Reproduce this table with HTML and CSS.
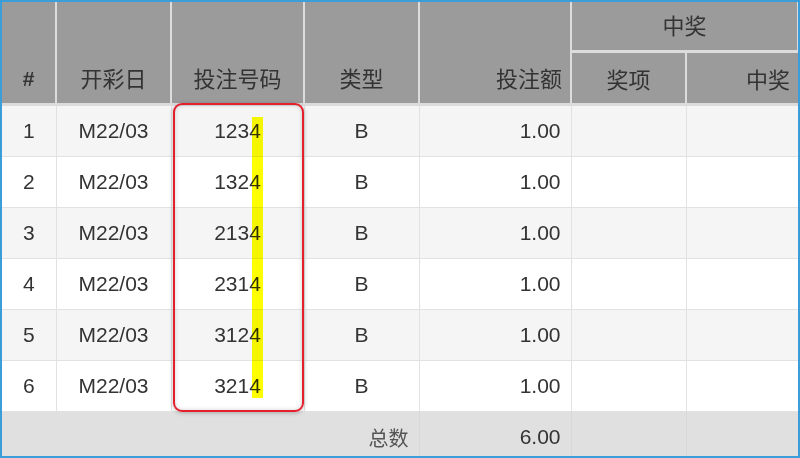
FILE: index.html
```html
<!DOCTYPE html>
<html lang="zh">
<head>
<meta charset="utf-8">
<link rel="stylesheet" href="styles.css">
</head>
<body>
<div class="frame">
  <table class="grid">
    <colgroup>
      <col class="c1"><col class="c2"><col class="c3"><col class="c4"><col class="c5"><col class="c6"><col class="c7">
    </colgroup>
    <thead>
      <tr class="h1">
        <th rowspan="2" class="hash">#</th>
        <th rowspan="2">开彩日</th>
        <th rowspan="2">投注号码</th>
        <th rowspan="2">类型</th>
        <th rowspan="2" class="right">投注额</th>
        <th colspan="2" class="group">中奖</th>
      </tr>
      <tr class="h2">
        <th>奖项</th>
        <th class="right">中奖</th>
      </tr>
    </thead>
    <tbody>
      <tr class="odd"><td>1</td><td>M22/03</td><td>1234</td><td>B</td><td class="right">1.00</td><td></td><td></td></tr>
      <tr><td>2</td><td>M22/03</td><td>1324</td><td>B</td><td class="right">1.00</td><td></td><td></td></tr>
      <tr class="odd"><td>3</td><td>M22/03</td><td>2134</td><td>B</td><td class="right">1.00</td><td></td><td></td></tr>
      <tr><td>4</td><td>M22/03</td><td>2314</td><td>B</td><td class="right">1.00</td><td></td><td></td></tr>
      <tr class="odd"><td>5</td><td>M22/03</td><td>3124</td><td>B</td><td class="right">1.00</td><td></td><td></td></tr>
      <tr><td>6</td><td>M22/03</td><td>3214</td><td>B</td><td class="right">1.00</td><td></td><td></td></tr>
    </tbody>
    <tfoot>
      <tr>
        <td colspan="4" class="right label">总数</td>
        <td class="right">6.00</td>
        <td></td><td></td>
      </tr>
    </tfoot>
  </table>
  <div class="highlight"></div>
  <div class="callout"></div>
</div>
</body>
</html>
```
FILE: styles.css
```css
html, body {
  margin: 0;
  padding: 0;
  background: #ffffff;
}
.frame {
  position: relative;
  width: 800px;
  height: 458px;
  box-sizing: border-box;
  border: 2px solid #3a9fd8;
  overflow: hidden;
  background: #ffffff;
}
.grid {
  width: 796px;
  border-collapse: collapse;
  table-layout: fixed;
  font-family: "Liberation Sans", "Noto Sans CJK SC", Arial, sans-serif;
  color: #333333;
}
.c1 { width: 54px; }
.c2 { width: 115px; }
.c3 { width: 133px; }
.c4 { width: 115px; }
.c5 { width: 152px; }
.c6 { width: 115px; }
.c7 { width: 112px; }

th {
  background: #9b9b9b;
  font-family: "Noto Sans CJK SC", "Liberation Sans", sans-serif;
  font-weight: 400;
  font-size: 22px;
  color: #333333;
  text-align: center;
  vertical-align: bottom;
  padding: 0 8px 11px;
  border-left: 2px solid #dcdcdc;
  border-right: 2px solid #dcdcdc;
  line-height: 30px;
}
thead tr:first-child th:first-child { border-left: none; }
th.hash {
  font-family: "Liberation Sans", sans-serif;
  font-weight: 700;
  font-size: 21px;
  padding-bottom: 9px;
}
.h1 { height: 49px; }
.h1 th.group {
  vertical-align: middle;
  padding: 0 8px 4px;
  border-bottom: 3px solid #dcdcdc;
}
.h2 { height: 53px; }
.h2 th { padding-bottom: 10px; }
thead tr:last-child th,
thead th[rowspan] { border-bottom: 3px solid #dcdcdc; }
.h2 th:last-child { border-right: none; }

td {
  height: 50px;
  padding: 0 10px;
  font-size: 21px;
  text-align: center;
  vertical-align: middle;
  border: 1px solid #e2e2e2;
  background: #ffffff;
}
td:first-child { border-left: none; }
td:last-child { border-right: none; }
tbody tr.odd td { background: #f5f5f5; }
.right { text-align: right; }
th.right { text-align: right; padding-right: 8px; }
td.right { padding-right: 10px; }

tfoot td {
  height: 43px;
  background: #e0e0e0;
  border-color: #e0e0e0;
  border-right-color: #d8d8d8;
  border-bottom: none;
  padding-top: 4px;
}
tfoot td.label {
  font-family: "Noto Sans CJK SC", sans-serif;
  font-size: 20px;
  color: #555555;
}

.highlight {
  position: absolute;
  left: 250px;
  top: 115px;
  width: 11px;
  height: 281px;
  background: #ffff00;
  mix-blend-mode: multiply;
}
.callout {
  position: absolute;
  left: 171px;
  top: 101px;
  width: 131px;
  height: 309px;
  box-sizing: border-box;
  border: 2px solid #e3202c;
  border-radius: 9px;
  box-shadow: inset 0 0 4px rgba(0, 0, 0, 0.18), 0 1px 4px rgba(0, 0, 0, 0.25);
}
```
